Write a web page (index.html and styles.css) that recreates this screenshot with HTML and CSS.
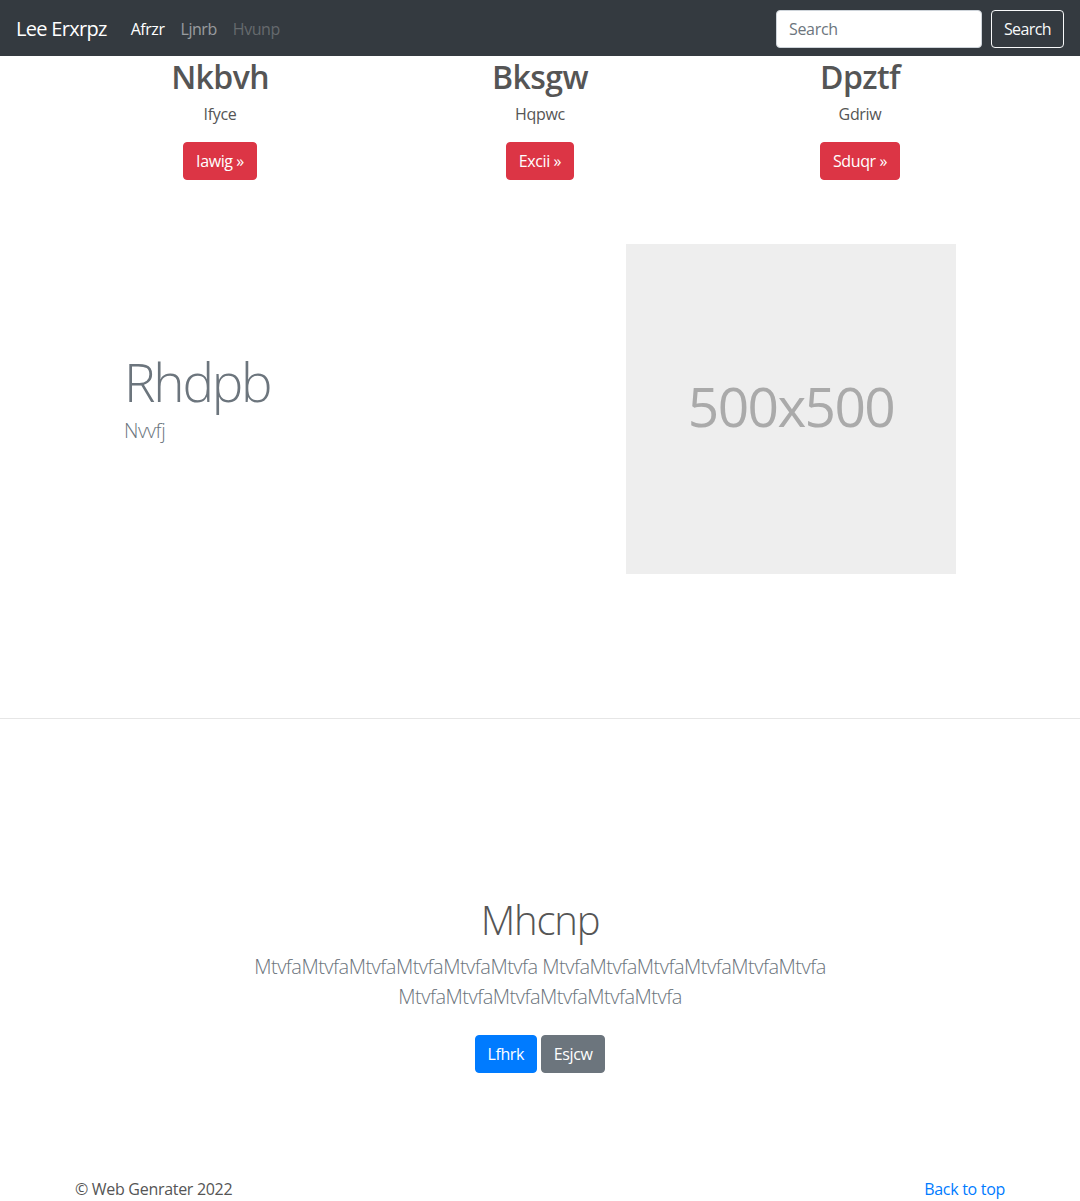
FILE: index.html
```html
<!DOCTYPE html>
<html lang="en">
<head>
<meta charset="utf-8">
<title>Lee Erxrpz</title>
<link rel="stylesheet" href="styles.css">
</head>
<body>
<header class="navbar">
  <div class="nav-left">
    <a class="brand" href="#">Lee Erxrpz</a>
    <nav class="nav-links">
      <a class="nav-link active" href="#">Afrzr</a>
      <a class="nav-link" href="#">Ljnrb</a>
      <a class="nav-link disabled" href="#">Hvunp</a>
    </nav>
  </div>
  <form class="search">
    <input class="search-input" type="text" placeholder="Search">
    <button class="btn btn-outline-light" type="button">Search</button>
  </form>
</header>

<main>
  <section class="container marketing">
    <div class="col">
      <h2 class="col-title">Nkbvh</h2>
      <p class="col-text">Ifyce</p>
      <p class="col-text"><a class="btn btn-danger" href="#">Iawig »</a></p>
    </div>
    <div class="col">
      <h2 class="col-title">Bksgw</h2>
      <p class="col-text">Hqpwc</p>
      <p class="col-text"><a class="btn btn-danger" href="#">Excii »</a></p>
    </div>
    <div class="col">
      <h2 class="col-title">Dpztf</h2>
      <p class="col-text">Gdriw</p>
      <p class="col-text"><a class="btn btn-danger" href="#">Sduqr »</a></p>
    </div>
  </section>

  <section class="container featurette">
    <div class="feat-text">
      <h1 class="feat-heading">Rhdpb</h1>
      <p class="lead muted feat-lead">Nvvfj</p>
    </div>
    <div class="placeholder">500x500</div>
  </section>

  <hr class="divider">

  <section class="jumbo">
    <div class="jumbo-inner">
      <h1 class="jumbo-heading">Mhcnp</h1>
      <p class="lead muted jumbo-lead">MtvfaMtvfaMtvfaMtvfaMtvfaMtvfa MtvfaMtvfaMtvfaMtvfaMtvfaMtvfa MtvfaMtvfaMtvfaMtvfaMtvfaMtvfa</p>
      <p class="jumbo-actions">
        <a class="btn btn-primary" href="#">Lfhrk</a>
        <a class="btn btn-secondary" href="#">Esjcw</a>
      </p>
    </div>
  </section>
</main>

<footer class="container footer">
  <p class="footer-copy">© Web Genrater 2022</p>
  <a class="footer-link" href="#">Back to top</a>
</footer>
</body>
</html>
```

FILE: styles.css
```css
* { box-sizing: border-box; }

html, body {
  margin: 0;
  padding: 0;
}

body {
  font-family: "Open Sans", "Noto Sans", "DejaVu Sans", sans-serif;
  font-size: 16px;
  line-height: 1.5;
  letter-spacing: -0.3px;
  color: #555;
  background: #fff;
}

a { text-decoration: none; }

/* Navbar */
.navbar {
  height: 56px;
  background: #343a40;
  display: flex;
  align-items: center;
  justify-content: space-between;
  padding: 9px 16px 7px;
}

.nav-left {
  display: flex;
  align-items: center;
}

.brand {
  color: #fff;
  font-size: 20px;
  line-height: 30px;
  letter-spacing: -0.7px;
  margin-right: 16px;
  padding: 5px 0;
}

.nav-links {
  display: flex;
}

.nav-link {
  padding: 8px 8px;
  letter-spacing: -0.45px;
  color: rgba(255, 255, 255, 0.5);
}

.nav-link.active { color: #fff; }
.nav-link.disabled { color: rgba(255, 255, 255, 0.25); }

.search {
  display: flex;
  align-items: center;
  margin: 0;
  margin-top: -1px;
}

.search-input {
  width: 206px;
  height: 38px;
  padding: 6px 12px;
  font-family: inherit;
  font-size: 16px;
  letter-spacing: -0.3px;
  color: #495057;
  background: #fff;
  border: 1px solid #ced4da;
  border-radius: 4px;
  margin-right: 9px;
}

.search-input::placeholder { color: #6c757d; }

/* Buttons */
.btn {
  display: inline-block;
  font-family: inherit;
  font-size: 16px;
  line-height: 24px;
  letter-spacing: -0.4px;
  padding: 6px 12px;
  border: 1px solid transparent;
  border-radius: 4px;
  color: #fff;
  background: transparent;
  cursor: pointer;
}

.btn-outline-light {
  color: #f8f9fa;
  border-color: #f8f9fa;
  letter-spacing: -0.6px;
}

.btn-danger { background: #dc3545; border-color: #dc3545; }
.btn-primary { background: #007bff; border-color: #007bff; }
.btn-secondary { background: #6c757d; border-color: #6c757d; }

/* Container */
.container {
  width: 960px;
  margin: 0 auto;
}

/* Marketing */
.marketing {
  display: grid;
  grid-template-columns: repeat(3, 1fr);
  text-align: center;
}

.col { padding: 0 15px; }

.col-title {
  margin: 2px 0 6px;
  font-size: 32px;
  font-weight: 600;
  letter-spacing: -0.6px;
  line-height: 1.2;
}

.col-text {
  margin: 0 0 16px;
}

/* Featurette */
.featurette {
  display: grid;
  grid-template-columns: 1fr 330px;
  align-items: center;
  padding: 48px 64px 144px;
}

.feat-text { padding-bottom: 4px; }

.feat-heading {
  margin: 0;
  font-size: 53px;
  font-weight: 300;
  letter-spacing: -2.2px;
  line-height: 1.1;
  color: #6c757d;
}

.lead {
  font-size: 20px;
  font-weight: 300;
  line-height: 1.5;
  letter-spacing: -0.4px;
  margin: 0 0 16px;
}

.feat-lead { margin-top: 4px; }

.muted { color: #6c757d; }

.placeholder {
  width: 330px;
  height: 330px;
  background: #eee;
  color: #aaa;
  font-size: 55px;
  letter-spacing: -1.6px;
  padding-bottom: 6px;
  display: flex;
  align-items: center;
  justify-content: center;
}

.divider {
  margin: 0;
  border: 0;
  border-top: 1px solid #e6e6e6;
}

/* Jumbotron */
.jumbo {
  padding: 177px 0 80px;
  text-align: center;
}

.jumbo-inner {
  max-width: 640px;
  margin: 0 auto;
}

.jumbo-heading {
  margin: 0 0 8px;
  font-size: 40px;
  font-weight: 300;
  letter-spacing: -1.2px;
  line-height: 1.2;
}

.jumbo-lead {
  letter-spacing: -0.5px;
}

.jumbo-actions {
  margin: 0 0 16px;
  padding-top: 7px;
}

.jumbo-actions .btn { margin: 0 0 8px; }

/* Footer */
.footer {
  display: flex;
  justify-content: space-between;
  align-items: center;
  padding: 0 15px;
}

.footer-copy { margin: 0; }

.footer-link { color: #007bff; }
```
